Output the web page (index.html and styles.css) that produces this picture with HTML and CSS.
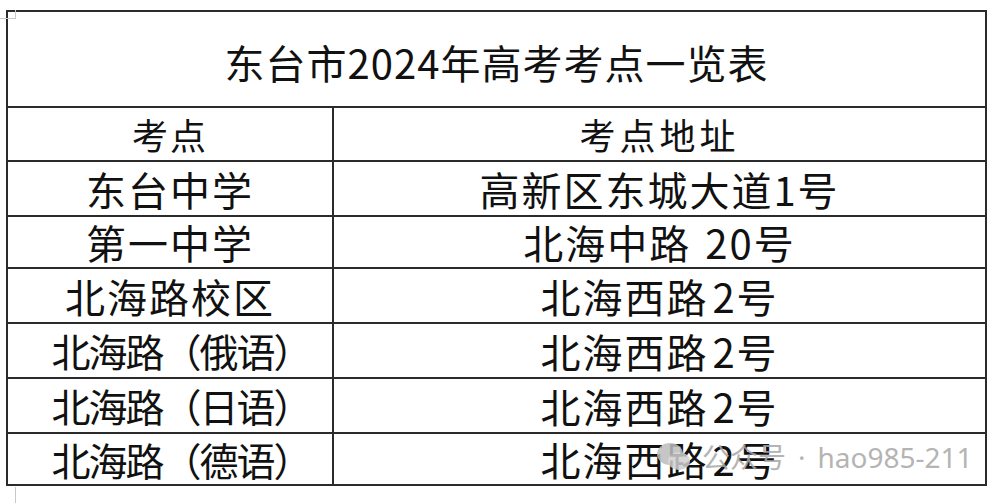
FILE: index.html
```html
<!DOCTYPE html>
<html lang="zh">
<head>
<meta charset="utf-8">
<link rel="stylesheet" href="styles.css">
</head>
<body>
<div class="page">
  <span class="mark mark-tl-h"></span>
  <span class="mark mark-tl-v"></span>
  <span class="mark mark-bl-v"></span>
  <table class="sheet">
    <colgroup><col class="c1"><col class="c2"></colgroup>
    <tr class="r-title"><td colspan="2" class="title">东台市2024年高考考点一览表</td></tr>
    <tr class="r-head"><td class="head">考点</td><td class="head head-wide">考点地址</td></tr>
    <tr class="r55"><td>东台中学</td><td>高新区东城大道1号</td></tr>
    <tr class="r52"><td>第一中学</td><td>北海中路<span class="num20">20</span>号</td></tr>
    <tr class="r55"><td>北海路校区</td><td>北海西路<span class="num2">2</span>号</td></tr>
    <tr class="r55"><td class="paren">北海路（俄语）</td><td>北海西路<span class="num2">2</span>号</td></tr>
    <tr class="r55"><td class="paren">北海路（日语）</td><td>北海西路<span class="num2">2</span>号</td></tr>
    <tr class="r52"><td class="paren">北海路（德语）</td><td>北海西路<span class="num2">2</span>号</td></tr>
  </table>
  <div class="watermark">
    <svg class="wm-icon" width="36" height="32" viewBox="0 0 36 32">
      <ellipse cx="14" cy="13" rx="13" ry="11" fill="#bdbdbd"/>
      <ellipse cx="23" cy="20" rx="11" ry="9" fill="#cfcfcf"/>
    </svg>
    <span class="wm-text">公众号</span>
    <span class="wm-text wm-dot">·</span>
    <span class="wm-text">hao985-211</span>
  </div>
</div>
</body>
</html>
```
FILE: styles.css
```css
html, body {
  margin: 0;
  padding: 0;
  background: #ffffff;
}
.page {
  position: relative;
  width: 1002px;
  height: 503px;
  padding: 10px 0 0 6px;
  box-sizing: border-box;
  font-family: "Noto Sans CJK SC", "Noto Sans", sans-serif;
  color: #111;
}
.sheet {
  border-collapse: collapse;
  width: 979px;
  table-layout: fixed;
}
.c1 { width: 326px; }
.c2 { width: 653px; }
.sheet td {
  border: 2px solid #2b2b2b;
  text-align: center;
  padding: 0;
  font-size: 40px;
  line-height: 1;
  letter-spacing: 2px;
  white-space: nowrap;
}
.sheet td.title {
  font-size: 40px;
  letter-spacing: 1px;
  padding-top: 6px;
}
.r-title { height: 96px; }
.r-head { height: 54px; }
.r55 { height: 55px; }
.r52 { height: 52px; }
.sheet td.head {
  font-size: 36px;
  letter-spacing: 2px;
}
.sheet td.head-wide {
  letter-spacing: 4px;
}
.sheet td.paren {
  font-size: 39px;
  letter-spacing: -2px;
  padding-left: 22px;
}
.num20 { margin-left: 14px; }
.num2 { margin-left: 4px; }
.mark {
  position: absolute;
  background: #c9c9c9;
}
.mark-tl-h { left: 0; top: 18px; width: 16px; height: 1px; }
.mark-tl-v { left: 15px; top: 10px; width: 1px; height: 9px; }
.mark-bl-v { left: 15px; top: 487px; width: 1px; height: 16px; }
.watermark {
  position: absolute;
  left: 656px;
  top: 441px;
  display: flex;
  align-items: center;
  gap: 12px;
  opacity: 0.85;
}
.wm-icon { margin-right: -2px; }
.wm-text {
  font-family: "Noto Sans", "Noto Sans CJK SC", sans-serif;
  font-size: 28px;
  color: #a8a8a8;
  line-height: 1;
}
```
